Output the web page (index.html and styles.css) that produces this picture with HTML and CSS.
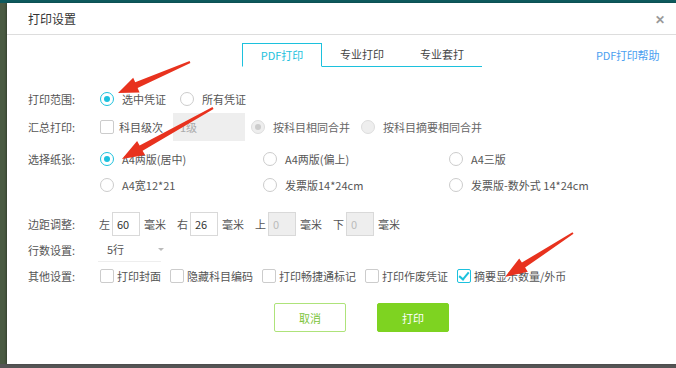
FILE: index.html
```html
<!DOCTYPE html>
<html lang="zh-CN">
<head>
  <meta charset="UTF-8">
  <title>打印设置</title>
  <link rel="stylesheet" href="styles.css">
</head>
<body>
  <div class="backdrop">
    <div class="dialog">
      <div class="dialog-header">
        <span class="dialog-title">打印设置</span>
        <span class="close">✕</span>
      </div>

      <div class="tab-bar">
        <div class="tabs">
          <div class="tab active">PDF打印</div>
          <div class="tab">专业打印</div>
          <div class="tab">专业套打</div>
        </div>
        <a class="help-link">PDF打印帮助</a>
      </div>

      <div class="form">
        <div class="row row-range">
          <div class="label">打印范围:</div>
          <label class="opt"><span class="radio checked"></span>选中凭证</label>
          <label class="opt"><span class="radio"></span>所有凭证</label>
        </div>

        <div class="row row-sum">
          <div class="label">汇总打印:</div>
          <label class="opt"><span class="check"></span>科目级次</label>
          <div class="level-input">1级</div>
          <label class="opt disabled"><span class="radio disabled dot"></span>按科目相同合并</label>
          <label class="opt disabled"><span class="radio disabled"></span>按科目摘要相同合并</label>
        </div>

        <div class="row row-paper">
          <div class="label">选择纸张:</div>
          <div class="paper-grid">
            <label class="opt"><span class="radio checked"></span>A4两版(居中)</label>
            <label class="opt"><span class="radio"></span>A4两版(偏上)</label>
            <label class="opt"><span class="radio"></span>A4三版</label>
            <label class="opt"><span class="radio"></span>A4宽12*21</label>
            <label class="opt"><span class="radio"></span>发票版14*24cm</label>
            <label class="opt"><span class="radio"></span>发票版-数外式 14*24cm</label>
          </div>
        </div>

        <div class="row row-margin">
          <div class="label">边距调整:</div>
          <div class="margin-item">左<span class="num">60</span>毫米</div>
          <div class="margin-item">右<span class="num">26</span>毫米</div>
          <div class="margin-item">上<span class="num off">0</span>毫米</div>
          <div class="margin-item">下<span class="num off">0</span>毫米</div>
        </div>

        <div class="row row-lines">
          <div class="label">行数设置:</div>
          <div class="select">5行<span class="caret"></span></div>
        </div>

        <div class="row row-other">
          <div class="label">其他设置:</div>
          <label class="opt"><span class="check"></span>打印封面</label>
          <label class="opt"><span class="check"></span>隐藏科目编码</label>
          <label class="opt"><span class="check"></span>打印畅捷通标记</label>
          <label class="opt"><span class="check"></span>打印作废凭证</label>
          <label class="opt"><span class="check on"></span>摘要显示数量/外币</label>
        </div>
      </div>

      <div class="actions">
        <button class="btn btn-cancel">取消</button>
        <button class="btn btn-print">打印</button>
      </div>
    </div>
  </div>

  <svg class="arrows" width="676" height="368" viewBox="0 0 676 368">
    <polygon points="118,93 139.6,92.4 137.6,87.9 190.4,62.9 189.6,61.1 135.2,82.3 133.2,77.8" />
    <polygon points="122,159 145.1,155.1 142.6,150.7 213.5,108.9 212.5,107.1 139.6,145.5 137.1,141.1" />
    <polygon points="505,277 527.8,271.8 525.1,267.6 573.5,233.8 572.5,232.2 521.9,262.6 519.2,258.4" />
  </svg>
</body>
</html>
```

FILE: styles.css
```css
:root {
  --cyan: #1cc1dd;
  --text: #555;
  --border: #d9d9d9;
  --green: #7ed321;
}

html, body {
  margin: 0;
  padding: 0;
  height: 100%;
  font-family: "Noto Sans CJK SC", "Noto Sans", sans-serif;
  font-size: 11px;
  color: var(--text);
}

body {
  background: #555;
  position: relative;
  overflow: hidden;
}

.backdrop {
  height: 364px;
  background: linear-gradient(to bottom, #0e5a5d 0, #0e5a5d 3px, #4a5a42 3px);
  padding-top: 3px;
  padding-left: 7px;
  box-sizing: border-box;
}

.dialog {
  width: 680px;
  height: 361px;
  background: #fff;
  box-shadow: -1px 0 2px rgba(0, 0, 0, 0.3);
}

/* header */
.dialog-header {
  height: 31px;
  border-bottom: 1px solid #ddd;
  display: flex;
  align-items: center;
  padding-left: 21px;
  padding-right: 22px;
}

.dialog-title {
  font-size: 12px;
  color: #333;
  flex: 1;
}

.close {
  color: #999;
  font-size: 12px;
  font-weight: 700;
}

/* tabs */
.tab-bar {
  display: flex;
  align-items: flex-end;
  margin-top: 8px;
  padding-left: 235px;
  height: 24px;
}

.tabs {
  display: flex;
  border-bottom: 1px solid var(--cyan);
  height: 23px;
}

.tab {
  width: 80px;
  text-align: center;
  line-height: 23px;
  color: #444;
}

.tab.active {
  width: 78px;
  color: var(--cyan);
  border: 1px solid var(--cyan);
  border-bottom: 1px solid #fff;
  margin-bottom: -1px;
  line-height: 22px;
}

.help-link {
  margin-left: 114px;
  color: #4ba0f0;
  line-height: 23px;
  align-self: flex-start;
  margin-top: 1px;
  letter-spacing: -0.2px;
}

/* form */
.form {
  padding-left: 21px;
  margin-top: 19px;
}

.row {
  display: flex;
  align-items: center;
}

.label {
  width: 72px;
  flex-shrink: 0;
}

.opt {
  display: flex;
  align-items: center;
  white-space: nowrap;
}

.opt.disabled {
  color: #666;
}

.radio {
  width: 12px;
  height: 12px;
  border: 1px solid #ccc;
  border-radius: 50%;
  margin-right: 8px;
  position: relative;
  flex-shrink: 0;
}

.radio.checked {
  border-color: var(--cyan);
}

.radio.checked::after,
.radio.dot::after {
  content: "";
  position: absolute;
  left: 3px;
  top: 3px;
  width: 6px;
  height: 6px;
  border-radius: 50%;
  background: var(--cyan);
}

.radio.disabled {
  background: #eee;
  border-color: #ddd;
}

.radio.dot::after {
  background: #ccc;
}

.check {
  width: 12px;
  height: 12px;
  border: 1px solid #ccc;
  border-radius: 2px;
  margin-right: 3px;
  position: relative;
  flex-shrink: 0;
}

.check.on {
  border-color: var(--cyan);
}

.check.on::after {
  content: "";
  position: absolute;
  left: 3px;
  top: 0px;
  width: 4px;
  height: 8px;
  border-right: 2px solid var(--cyan);
  border-bottom: 2px solid var(--cyan);
  transform: rotate(40deg);
}

.row-range {
  height: 26px;
}

.row-range .opt + .opt {
  margin-left: 14px;
}

.row-sum {
  height: 28px;
  margin-top: 1px;
}

.row-sum > .opt:first-of-type .check {
  margin-right: 5px;
}

.level-input {
  width: 65px;
  height: 28px;
  line-height: 28px;
  background: #eee;
  color: #aaa;
  padding-left: 7px;
  margin-left: 10px;
  margin-right: 6px;
}

.row-sum .opt.disabled + .opt.disabled {
  margin-left: 11px;
}

.row-paper {
  align-items: flex-start;
  margin-top: 5px;
}

.row-paper .label {
  line-height: 26px;
}

.paper-grid {
  display: grid;
  grid-template-columns: 163px 186px auto;
  grid-auto-rows: 26px;
}

.paper-grid .opt {
  height: 26px;
}

.row-margin {
  height: 24px;
  margin-top: 14px;
}

.row-margin .label {
  width: 71px;
}

.margin-item {
  display: flex;
  align-items: center;
  margin-right: 11px;
}

.num {
  width: 22px;
  height: 22px;
  line-height: 22px;
  border: 1px solid var(--border);
  padding-left: 4px;
  margin: 0 4px 0 2px;
  color: #333;
}

.num.off {
  background: #eee;
  color: #bbb;
}

.row-lines {
  height: 24px;
  margin-top: 2px;
}

.select {
  width: 63px;
  margin-left: -2px;
  padding-left: 9px;
  height: 24px;
  line-height: 22px;
  border-bottom: 1px solid #eee;
  box-sizing: border-box;
  position: relative;
}

.caret {
  position: absolute;
  left: 60px;
  top: 10px;
  border-left: 3px solid transparent;
  border-right: 3px solid transparent;
  border-top: 3px solid #bbb;
}

.row-other {
  height: 24px;
  margin-top: 2px;
}

.row-other .opt + .opt {
  margin-left: 9px;
}

/* buttons */
.actions {
  display: flex;
  gap: 31px;
  padding-left: 267px;
  margin-top: 15px;
}

.btn {
  width: 72px;
  height: 29px;
  border-radius: 2px;
  font-family: inherit;
  font-size: 11px;
  cursor: pointer;
}

.btn-cancel {
  background: #fff;
  border: 1px solid #aee37a;
  color: #7cc43a;
}

.btn-print {
  background: var(--green);
  border: 1px solid var(--green);
  color: #fff;
}

.arrows {
  position: absolute;
  left: 0;
  top: 0;
  pointer-events: none;
}

.arrows polygon {
  fill: #e8321e;
}
```
